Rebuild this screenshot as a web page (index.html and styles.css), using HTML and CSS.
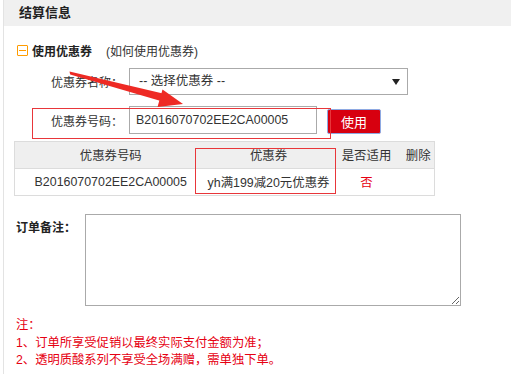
FILE: index.html
```html
<!DOCTYPE html>
<html lang="zh-CN">
<head>
    <meta charset="UTF-8">
    <title>结算信息</title>
    <link rel="stylesheet" href="styles.css">
</head>
<body>
    <div class="page">
        <div class="section-head">结算信息</div>

        <div class="section-body">
            <div class="coupon-title">
                <span class="toggle-icon"></span>
                <b>使用优惠券</b>
                <a href="#" class="help-link">(如何使用优惠券)</a>
            </div>

            <div class="form-row">
                <label class="form-label">优惠券名称：</label>
                <div class="select-box">-- 选择优惠券 --</div>
            </div>

            <div class="form-row code-row">
                <label class="form-label">优惠券号码：</label>
                <input type="text" class="code-input" value="B2016070702EE2CA00005">
                <button class="use-btn">使用</button>
            </div>

            <table class="coupon-table">
                <thead>
                    <tr>
                        <th class="col-code">优惠券号码</th>
                        <th class="col-name">优惠券</th>
                        <th class="col-ok">是否适用</th>
                        <th class="col-del">删除</th>
                    </tr>
                </thead>
                <tbody>
                    <tr>
                        <td>B2016070702EE2CA00005</td>
                        <td>yh满199减20元优惠券</td>
                        <td class="no">否</td>
                        <td></td>
                    </tr>
                </tbody>
            </table>

            <div class="remark-row">
                <label class="remark-label">订单备注：</label>
                <textarea class="remark-box"></textarea>
            </div>

            <div class="notes">
                <p>注：</p>
                <p>1、订单所享受促销以最终实际支付金额为准；</p>
                <p>2、透明质酸系列不享受全场满赠，需单独下单。</p>
            </div>
        </div>

        <!-- 标注 -->
        <div class="mark mark-code"></div>
        <div class="mark mark-coupon"></div>
        <svg class="mark-arrow" width="511" height="374" viewBox="0 0 511 374">
            <polygon points="69.5,71.5 70.2,74.5 162.5,101.5 165,94" fill="#ee2a24"/>
            <polygon points="183,104 157.5,107 162.5,89.5" fill="#ee2a24"/>
        </svg>
    </div>
</body>
</html>
```

FILE: styles.css
```css
* {
    margin: 0;
    padding: 0;
    box-sizing: border-box;
}

html, body {
    overflow: hidden;
}

body {
    background: #fff;
    font-family: "Liberation Sans", "Noto Sans CJK SC", sans-serif;
    font-size: 12px;
    color: #333;
}

.page {
    position: relative;
    margin-left: 3px;
    border-left: 1px solid #e3e3e3;
    height: 374px;
}

.section-head {
    height: 26px;
    line-height: 26px;
    background: #f0f0f0;
    padding-left: 15px;
    font-size: 13px;
    font-weight: bold;
    color: #222;
}

.coupon-title {
    display: flex;
    align-items: center;
    height: 20px;
    margin-top: 14px;
    padding-left: 13px;
}

.coupon-title b {
    font-size: 12px;
    color: #222;
    margin-left: 4px;
}

.toggle-icon {
    position: relative;
    flex-shrink: 0;
    width: 11px;
    height: 11px;
    margin-top: 1px;
    border: 1px solid #ff9c00;
    border-radius: 1px;
}

.toggle-icon::after {
    content: "";
    position: absolute;
    left: 1px;
    right: 1px;
    top: 4px;
    height: 1px;
    background: #ff9c00;
}

.help-link {
    margin-left: 14px;
    color: #333;
    text-decoration: none;
}

.form-row {
    display: flex;
    align-items: center;
    margin-top: 8px;
}

.form-label {
    width: 119px;
    margin-right: 6px;
    text-align: right;
    font-size: 12px;
}

.select-box {
    position: relative;
    width: 279px;
    height: 27px;
    line-height: 25px;
    border: 1px solid #aaa;
    padding-left: 9px;
    font-size: 12.5px;
}

.select-box::after {
    content: "";
    position: absolute;
    right: 7px;
    top: 10px;
    border-left: 4px solid transparent;
    border-right: 4px solid transparent;
    border-top: 6px solid #222;
}

.code-row {
    margin-top: 11px;
}

.code-input {
    width: 188px;
    height: 28px;
    border: 1px solid #aaa;
    padding-left: 6px;
    font-family: "Liberation Sans", sans-serif;
    font-size: 12.4px;
    color: #333;
    outline: none;
}

.use-btn {
    width: 54px;
    height: 25px;
    margin-left: 10px;
    margin-top: 3px;
    background: #d7000f;
    color: #fff;
    border: 1px solid #8ea9e2;
    border-radius: 2px;
    font-family: "Noto Sans CJK SC", sans-serif;
    font-size: 13px;
}

.coupon-table {
    margin-top: 7px;
    margin-left: 10px;
    width: 420px;
    border-collapse: collapse;
    border: 1px solid #dcdcdc;
    table-layout: fixed;
}

.coupon-table th,
.coupon-table td {
    height: 27px;
    text-align: center;
    font-weight: normal;
    font-size: 12.4px;
    padding: 0;
}

.coupon-table th {
    background: #efefef;
    border-bottom: 1px solid #dcdcdc;
}

.col-code { width: 192px; }
.col-name { width: 124px; }
.col-ok { width: 72px; }
.col-del { width: 32px; }

.coupon-table .no {
    color: #e60012;
}

.remark-row {
    display: flex;
    align-items: flex-start;
    margin-top: 18px;
}

.remark-label {
    width: 81px;
    padding-left: 12px;
    margin-top: 4px;
    font-weight: bold;
    color: #222;
}

.remark-box {
    width: 376px;
    height: 92px;
    border: 1px solid #aaa;
    resize: both;
}

.notes {
    margin-top: 11px;
    padding-left: 12px;
    color: #e60012;
    font-size: 12.3px;
    line-height: 17.5px;
}

.mark {
    position: absolute;
    border: 1.5px solid #e8363a;
}

.mark-code {
    left: 28px;
    top: 108px;
    width: 299px;
    height: 31px;
}

.mark-coupon {
    left: 191px;
    top: 148px;
    width: 141px;
    height: 46px;
}

.mark-arrow {
    position: absolute;
    left: -4px;
    top: 0;
    pointer-events: none;
}
```
